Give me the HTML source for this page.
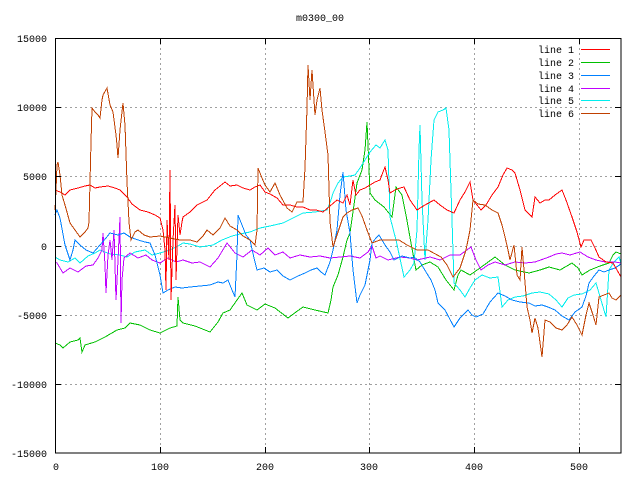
<!DOCTYPE html>
<html><head><meta charset="utf-8"><style>
html,body{margin:0;padding:0;background:#fff;}
svg{display:block;}
text{font-family:"Liberation Mono",monospace;font-size:10px;fill:#000;}
polyline{fill:none;stroke-width:1;}
</style></head><body>
<svg width="640" height="480" viewBox="0 0 640 480" xmlns="http://www.w3.org/2000/svg">
<rect width="640" height="480" fill="#fff"/>
<g stroke="#a0a0a0" stroke-dasharray="2,3" stroke-width="1" shape-rendering="crispEdges">
<line x1="55" y1="107.5" x2="621" y2="107.5"/>
<line x1="55" y1="176.5" x2="621" y2="176.5"/>
<line x1="55" y1="246.5" x2="621" y2="246.5"/>
<line x1="55" y1="315.5" x2="621" y2="315.5"/>
<line x1="55" y1="384.5" x2="621" y2="384.5"/>
<line x1="160.5" y1="38" x2="160.5" y2="453"/>
<line x1="265.5" y1="38" x2="265.5" y2="453"/>
<line x1="369.5" y1="38" x2="369.5" y2="453"/>
<line x1="474.5" y1="38" x2="474.5" y2="453"/>
<line x1="579.5" y1="38" x2="579.5" y2="453"/>
</g>
<text x="320" y="21" text-anchor="middle">m0300_00</text>
<g text-anchor="end">
<text x="47" y="42">15000</text>
<text x="47" y="111">10000</text>
<text x="47" y="180">5000</text>
<text x="47" y="250">0</text>
<text x="47" y="319">-5000</text>
<text x="47" y="388">-10000</text>
<text x="47" y="457">-15000</text>
</g>
<g text-anchor="middle">
<text x="56" y="470">0</text>
<text x="160" y="470">100</text>
<text x="265" y="470">200</text>
<text x="369" y="470">300</text>
<text x="474" y="470">400</text>
<text x="579" y="470">500</text>
</g>
<g shape-rendering="crispEdges">
<polyline stroke="#00c000" points="55,343 60,345 63,348 70,342 78,340 80,338 82,352 85,345 95,342 105,337 117,330 125,328 130,323 140,325 150,330 160,333 170,328 177,326 178,297 180,320 183,323 195,326 210,332 218,322 223,313 230,310 237,300 242,293 247,305 257,310 265,304 275,308 288,318 296,312 303,307 315,310 328,313 331,300 333,287 338,275 343,257 347,240 350,233 354,205 357,183 362,170 365,150 367,122 368,145 370,193 375,200 384,207 392,217 396,187 402,195 406,215 411,243 416,270 422,265 430,262 438,267 446,280 454,290 458,275 461,270 470,275 480,268 495,257 505,265 515,270 529,273 540,270 549,267 560,270 572,263 578,268 582,275 590,270 600,266 609,263 613,255 616,252 621,254"/>
<polyline stroke="#00eeee" points="55,257 60,260 68,262 75,258 80,263 88,256 95,253 100,250 110,254 120,255 127,257 135,252 145,250 152,255 160,253 170,250 178,246 183,243 190,244 200,247 213,245 222,240 232,236 240,234 250,232 260,228 270,226 283,223 293,218 303,213 315,212 327,210 331,200 333,193 338,183 343,177 350,176 355,175 360,168 365,160 370,152 376,145 380,148 385,140 388,150 390,217 396,240 404,277 410,270 414,263 417,230 419,150 420,125 422,200 425,260 428,220 431,160 434,120 438,112 443,110 446,108 449,130 452,220 454,283 460,290 465,297 470,288 475,280 482,275 490,278 498,277 502,307 508,300 515,297 523,296 532,293 540,292 549,294 556,300 562,307 568,298 574,295 582,294 590,290 596,283 601,300 606,317 609,270 614,262 619,257 621,263"/>
<polyline stroke="#c000ff" points="55,262 57,263 63,273 70,268 78,272 86,266 93,265 98,258 102,250 103,233 105,265 106,293 108,255 110,240 112,260 114,230 116,300 118,260 120,217 121,323 122,280 124,258 130,253 138,258 146,255 152,260 160,263 168,258 176,262 183,260 192,263 200,262 210,267 218,258 227,243 235,253 243,257 252,250 260,255 268,248 275,255 283,252 290,258 300,255 310,257 320,256 330,258 340,257 350,256 360,258 368,252 372,246 376,258 380,256 388,260 400,257 410,258 417,260 430,257 440,260 450,255 460,255 471,247 476,260 481,270 488,265 495,262 505,265 515,262 525,263 535,262 549,257 556,254 562,253 570,255 580,252 588,257 596,260 605,262 615,262 621,263"/>
<polyline stroke="#0080ff" points="55,215 57,210 60,218 65,245 70,260 73,250 75,240 80,245 86,250 93,253 100,245 106,238 110,233 118,235 124,233 130,237 138,240 145,242 150,243 155,255 160,275 163,293 168,290 175,287 182,288 190,287 200,286 210,285 218,282 223,283 228,280 232,290 235,297 237,255 238,215 242,225 246,235 250,240 254,258 257,270 264,268 270,272 277,270 283,276 290,280 298,276 305,273 311,270 317,268 321,272 325,275 330,262 333,250 337,230 340,195 343,172 346,210 350,233 353,270 357,303 360,295 365,285 370,260 372,243 376,238 379,235 385,245 390,252 394,260 402,256 410,258 414,257 420,262 426,272 431,280 435,290 438,303 445,310 454,327 460,318 468,310 472,315 476,317 483,314 490,302 498,293 505,296 512,300 520,302 529,303 535,306 542,305 548,307 555,310 562,316 569,320 575,312 582,307 586,296 589,283 594,276 599,270 604,272 609,270 615,268 621,264"/>
<polyline stroke="#ff0000" points="55,190 60,192 65,195 70,190 78,188 85,186 90,185 95,188 100,187 108,186 115,188 120,190 127,197 132,204 140,210 148,212 155,215 160,218 163,230 165,250 166,290 167,220 169,260 170,170 171,300 173,240 175,205 176,280 178,215 180,235 182,222 183,217 190,212 197,205 207,200 215,190 220,186 225,182 230,186 237,185 243,188 250,190 255,187 260,185 265,192 270,194 277,198 283,205 290,205 297,207 303,207 310,210 316,210 323,212 330,206 337,200 343,203 347,195 350,205 353,180 356,195 360,190 365,188 370,185 375,182 380,180 383,172 385,167 388,180 390,193 395,190 400,188 404,187 410,200 417,210 425,205 434,200 440,205 447,210 454,213 460,200 465,192 470,182 473,200 477,205 481,210 486,205 492,195 498,187 503,175 507,168 512,170 515,173 520,190 525,210 532,217 535,197 540,203 545,200 549,200 555,195 562,190 566,200 572,217 577,232 581,247 584,240 591,240 595,248 599,257 606,262 613,263 617,270 621,277"/>
<polyline stroke="#c04000" points="55,210 56,190 57,165 58,162 60,175 62,195 65,205 70,223 75,230 80,237 85,232 88,228 89,222 91,142 92,108 95,112 98,115 100,118 102,100 103,95 107,88 110,105 113,112 116,135 117,145 118,158 120,130 123,103 125,125 127,182 129,222 131,240 135,232 138,230 144,235 150,237 160,236 170,238 180,240 190,240 197,242 203,236 207,230 213,235 220,228 225,218 230,226 237,230 243,236 250,240 255,245 257,230 258,168 262,178 265,185 270,192 275,183 280,195 287,208 292,212 297,202 303,202 305,168 307,108 308,65 310,100 312,70 315,115 317,100 320,88 322,110 325,132 328,155 330,222 333,247 338,232 343,217 347,213 352,210 358,208 362,216 367,230 372,243 380,240 390,240 399,240 407,245 417,250 428,250 441,257 447,265 453,277 460,268 466,250 470,230 473,200 478,204 485,205 492,210 498,213 502,225 505,237 508,250 510,260 514,245 517,275 520,280 522,247 524,270 527,307 530,320 532,333 535,318 538,328 542,357 545,320 550,322 556,328 562,330 567,325 572,317 577,325 582,335 586,315 589,303 593,315 596,325 599,297 604,295 609,293 612,298 616,300 621,295"/>
<rect x="581" y="49" width="29" height="1" fill="#ff0000"/>
<rect x="581" y="62" width="29" height="1" fill="#00c000"/>
<rect x="581" y="75" width="29" height="1" fill="#0080ff"/>
<rect x="581" y="88" width="29" height="1" fill="#c000ff"/>
<rect x="581" y="100" width="29" height="1" fill="#00eeee"/>
<rect x="581" y="113" width="29" height="1" fill="#c04000"/>
</g>
<text x="538" y="53">line 1</text>
<text x="538" y="66">line 2</text>
<text x="538" y="79">line 3</text>
<text x="538" y="92">line 4</text>
<text x="538" y="104">line 5</text>
<text x="538" y="117">line 6</text>
<g stroke="#000" stroke-width="1" shape-rendering="crispEdges">
<rect x="55.5" y="38.5" width="565.5" height="414.5" fill="none"/>
<line x1="55" y1="107.5" x2="61" y2="107.5"/><line x1="615" y1="107.5" x2="621" y2="107.5"/>
<line x1="55" y1="176.5" x2="61" y2="176.5"/><line x1="615" y1="176.5" x2="621" y2="176.5"/>
<line x1="55" y1="246.5" x2="61" y2="246.5"/><line x1="615" y1="246.5" x2="621" y2="246.5"/>
<line x1="55" y1="315.5" x2="61" y2="315.5"/><line x1="615" y1="315.5" x2="621" y2="315.5"/>
<line x1="55" y1="384.5" x2="61" y2="384.5"/><line x1="615" y1="384.5" x2="621" y2="384.5"/>
<line x1="160.5" y1="38" x2="160.5" y2="44"/><line x1="160.5" y1="447" x2="160.5" y2="453"/>
<line x1="265.5" y1="38" x2="265.5" y2="44"/><line x1="265.5" y1="447" x2="265.5" y2="453"/>
<line x1="369.5" y1="38" x2="369.5" y2="44"/><line x1="369.5" y1="447" x2="369.5" y2="453"/>
<line x1="474.5" y1="38" x2="474.5" y2="44"/><line x1="474.5" y1="447" x2="474.5" y2="453"/>
<line x1="579.5" y1="38" x2="579.5" y2="44"/><line x1="579.5" y1="447" x2="579.5" y2="453"/>
</g>
</svg>
</body></html>
